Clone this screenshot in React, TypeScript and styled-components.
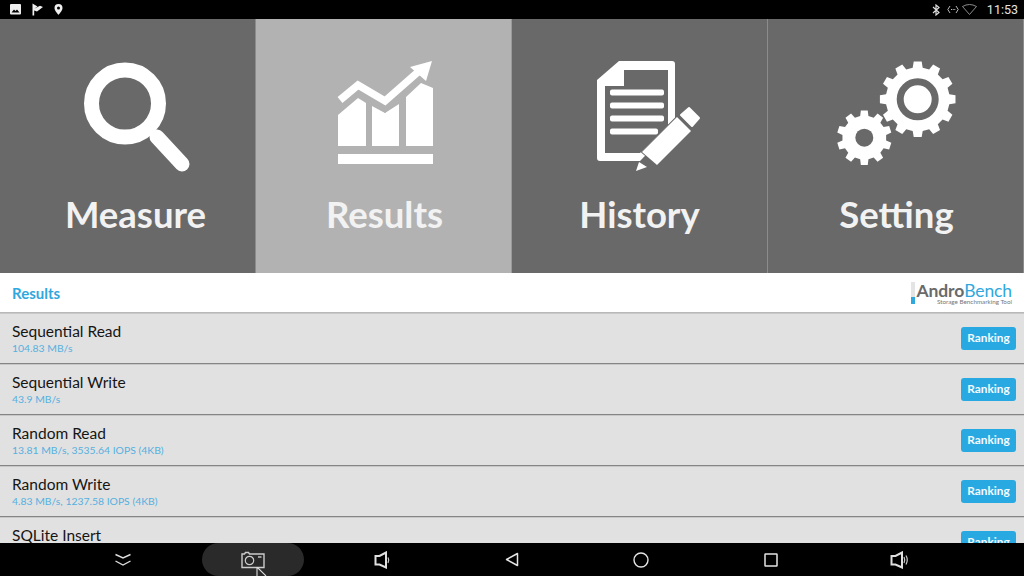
import React from "react";
import styled, { createGlobalStyle } from "styled-components";

const Global = createGlobalStyle`
  html, body { margin: 0; padding: 0; background: #000; }
  #root { width: 1024px; height: 576px; overflow: hidden; }
`;

const Screen = styled.div`
  width: 1024px; height: 576px; display: flex; flex-direction: column;
  font-family: Lato, "Liberation Sans", sans-serif; overflow: hidden; background: #e1e1e1;
`;
const StatusBar = styled.div`
  height: 19px; flex: none; background: #000; display: flex; align-items: center;
  justify-content: space-between; padding: 0 6px 0 10px; color: #ddd;
`;
const StatusGroup = styled.div`display: flex; align-items: center; gap: ${p => p.$gap}px;`;
const Clock = styled.span`
  font-family: Roboto, sans-serif; font-size: 12.5px; color: #e4e4e4; margin-left: 7px;
`;
const Tabs = styled.div`height: 254px; flex: none; display: grid; grid-template-columns: repeat(4, 256px);`;
const Tab = styled.div`
  background: ${p => (p.$active ? "#b2b2b2" : "#696969")};
  border-right: 1px solid ${p => (p.$active ? "#9a9a9a" : "#8c8c8c")};
  display: flex; flex-direction: column; align-items: center; padding-top: 36px; box-sizing: border-box;
`;
const TabIcon = styled.svg`width: 128px; height: 120px; flex: none; display: block;`;
const TabLabel = styled.div`
  color: #f2f2f2; font-weight: 700; font-size: 36.5px; line-height: 44px; margin-top: 17px;
  margin-left: ${p => p.$shift}px;
`;
const Header = styled.div`
  height: 39px; flex: none; background: #fff; display: flex; align-items: center;
  justify-content: space-between; padding: 0 12px;
`;
const HeaderTitle = styled.div`color: #2fa8de; font-weight: 700; font-size: 15px;`;
const Logo = styled.div`display: flex; align-items: stretch; gap: 1px; height: 22px;`;
const LogoBar = styled.div`
  width: 4px; background: linear-gradient(#e4e4e4 0 68%, #2fa8de 68% 100%);
`;
const LogoText = styled.div`display: flex; flex-direction: column; align-items: flex-end;`;
const LogoName = styled.div`font-size: 17.5px; line-height: 18px; color: #2fa8de; letter-spacing: -0.1px;`;
const LogoStrong = styled.span`color: #6a6a6a; font-weight: 700;`;
const LogoSub = styled.div`font-size: 6.3px; line-height: 4px; color: #777; white-space: nowrap;`;
const List = styled.div`flex: 1; min-height: 0; overflow: hidden; border-top: 1px solid #b8b8b8;`;
const Row = styled.div`
  height: 49px; background: #e1e1e1; border-top: 1px solid #c8c8c8; border-bottom: 1px solid #858585;
  display: flex; align-items: center; justify-content: space-between; padding: 0 8px 0 12px;
`;
const RowText = styled.div`display: flex; flex-direction: column; padding-bottom: 2px;`;
const RowName = styled.div`font-size: 15.5px; line-height: 20px; color: #151515;`;
const RowValue = styled.div`font-size: 10.4px; line-height: 13px; color: #55b0e0; margin-top: 1px;`;
const RankButton = styled.div`
  width: 55px; height: 23px; box-sizing: border-box; padding-bottom: 2px; border-radius: 3px;
  background: #29a9e1; color: #f4fbff; font-weight: 700;
  font-size: 11.8px; display: flex; align-items: center; justify-content: center; flex: none;
`;
const NavBar = styled.div`
  height: 33px; flex: none; background: #000; display: grid; grid-template-columns: repeat(7, 129.5px);
  padding: 0 0 0 58.5px;
`;
const NavItem = styled.div`
  position: relative; display: flex; align-items: center; justify-content: center;
  justify-self: center; width: ${p => (p.$active ? "102px" : "100%")};
  background: ${p => (p.$active ? "#2a2a2a" : "transparent")};
  border-radius: 17px;
`;
const Cursor = styled.svg`position: absolute; left: 54px; top: 24px; width: 12px; height: 12px;`;

function gearPath(cx: number, cy: number, outer: number, root: number, teeth: number) {
  const step = (Math.PI * 2) / teeth;
  const pts: string[] = [];
  for (let i = 0; i < teeth; i++) {
    const a = i * step - Math.PI / 2;
    const p = (r: number, o: number) =>
      `${(cx + r * Math.cos(a + o * step)).toFixed(2)},${(cy + r * Math.sin(a + o * step)).toFixed(2)}`;
    pts.push(p(root, -0.3), p(outer, -0.2), p(outer, 0.2), p(root, 0.3));
  }
  return "M" + pts.join("L") + "Z";
}

const DARK = "#696969";
const LIGHT = "#b2b2b2";

const MeasureIcon = () => (
  <TabIcon viewBox="64 55 128 120">
    <circle cx="125" cy="103.5" r="33.5" fill="none" stroke="#fff" strokeWidth="15" />
    <path d="M157 137L182 164" stroke="#fff" strokeWidth="15" strokeLinecap="round" />
  </TabIcon>
);
const ResultsIcon = () => (
  <TabIcon viewBox="320 55 128 120">
    <g fill="#fff">
      <path d="M338 115L358 98L366 103V146H338Z" />
      <path d="M372 106L385 113L399 104V146H372Z" />
      <path d="M406 97L421 83L433 88V146H406Z" />
      <rect x="338" y="154" width="95" height="10" />
      <path d="M410 67L432 61L426 81Z" />
    </g>
    <path d="M340 100L358 85L385 101L418 72" fill="none" stroke="#fff" strokeWidth="7.500" />
    <path d="M340 110L358 94.500L385 111L421 79" fill="none" stroke={LIGHT} strokeWidth="3" />
  </TabIcon>
);
const HistoryIcon = () => (
  <TabIcon viewBox="576 55 128 120">
    <path d="M597 80L619 61H672Q675 61 675 64V125L640 161H600Q597 161 597 158Z" fill="#fff" />
    <path d="M605 86H624V70H668V125L640 153H605Z" fill={DARK} />
    <g fill="#fff">
      <rect x="610" y="89.500" width="54" height="6" rx="2" />
      <rect x="610" y="102.500" width="54" height="6" rx="2" />
      <rect x="610" y="115.500" width="54" height="6" rx="2" />
      <rect x="610" y="128.500" width="48" height="6" rx="2" />
    </g>
    <path d="M642 152L677 117L691 131L657 165Z" fill="#fff" stroke={DARK} strokeWidth="2" paintOrder="stroke" />
    <path d="M681 115L689 108L699 118L692 126Z" fill="#fff" stroke="#fff" strokeWidth="2" strokeLinejoin="round" />
    <path d="M636 171L639 162L647 167Z" fill="#fff" />
  </TabIcon>
);
const SettingIcon = () => (
  <TabIcon viewBox="832 55 128 120">
    <path d={gearPath(917.7, 99.3, 38, 32, 12)} fill="#fff" />
    <circle cx="917.7" cy="99.300" r="17.500" fill="none" stroke={DARK} strokeWidth="7" />
    <path d={gearPath(864.3, 137.7, 27.5, 22, 10)} fill="#fff" />
    <circle cx="864.3" cy="137.700" r="9" fill={DARK} />
  </TabIcon>
);

const rows = [
  ["Sequential Read", "104.83 MB/s"],
  ["Sequential Write", "43.9 MB/s"],
  ["Random Read", "13.81 MB/s, 3535.64 IOPS (4KB)"],
  ["Random Write", "4.83 MB/s, 1237.58 IOPS (4KB)"],
  ["SQLite Insert", "\u00A0"],
];

export default function App() {
  return (
    <Screen>
      <Global />
      <StatusBar>
        <StatusGroup $gap={11}>
          <svg width="11" height="11" viewBox="0 0 11 11">
            <rect width="11" height="10.500" rx="1" fill="#eee" />
            <path d="M1.500 8.500L4 5.500L5.500 7L7 5.500L9.500 8.500Z" fill="#000" />
          </svg>
          <svg width="11" height="13" viewBox="0 0 11 13">
            <path d="M0.500 0.500L5.500 3.500L2.200 5.800L8 2.800L11 4L5 8.500L2.200 7.500V12.500H0.500Z" fill="#eee" />
          </svg>
          <svg width="9" height="11" viewBox="0 0 9 11">
            <path fillRule="evenodd" d="M4.500 0A4 4 0 0 1 8.500 4C8.500 6.500 5.500 9.500 4.500 11C3.500 9.500 0.500 6.500 0.500 4A4 4 0 0 1 4.500 0ZM4.500 2.500A1.500 1.500 0 1 0 4.500 5.500A1.500 1.500 0 1 0 4.500 2.500Z" fill="#eee" />
          </svg>
        </StatusGroup>
        <StatusGroup $gap={3}>
          <svg width="12" height="12" viewBox="0 0 12 12">
            <path d="M1 3L7 8.500L4 11V1L7 3.500L1 9" fill="none" stroke="#ddd" strokeWidth="1.200" />
          </svg>
          <svg width="12" height="9" viewBox="0 0 12 9">
            <path d="M3 1L0.800 4.500L3 8M9 1L11.200 4.500L9 8" fill="none" stroke="#ccc" strokeWidth="0.900" />
            <path d="M4 4.500H5M5.700 4.500H6.700M7.300 4.500H8.300" stroke="#bbb" strokeWidth="1" />
          </svg>
          <svg width="15" height="11" viewBox="0 0 15 11">
            <path d="M0.500 2.500Q7.500 -1.500 14.500 2.500L7.500 10.500Z" fill="none" stroke="#999" strokeWidth="0.900" />
          </svg>
          <Clock>11:53</Clock>
        </StatusGroup>
      </StatusBar>
      <Tabs>
        <Tab>
          <MeasureIcon />
          <TabLabel $shift={16}>Measure</TabLabel>
        </Tab>
        <Tab $active>
          <ResultsIcon />
          <TabLabel $shift={2}>Results</TabLabel>
        </Tab>
        <Tab>
          <HistoryIcon />
          <TabLabel $shift={0}>History</TabLabel>
        </Tab>
        <Tab>
          <SettingIcon />
          <TabLabel $shift={2}>Setting</TabLabel>
        </Tab>
      </Tabs>
      <Header>
        <HeaderTitle>Results</HeaderTitle>
        <Logo>
          <LogoBar />
          <LogoText>
            <LogoName>
              <LogoStrong>Andro</LogoStrong>Bench
            </LogoName>
            <LogoSub>Storage Benchmarking Tool</LogoSub>
          </LogoText>
        </Logo>
      </Header>
      <List>
        {rows.map(([name, value]) => (
          <Row key={name}>
            <RowText>
              <RowName>{name}</RowName>
              <RowValue>{value}</RowValue>
            </RowText>
            <RankButton>Ranking</RankButton>
          </Row>
        ))}
      </List>
      <NavBar>
        <NavItem>
          <svg width="18" height="14" viewBox="0 0 18 14">
            <path d="M1.500 1.500L9 5L16.500 1.500M1.500 8L9 12L16.500 8" fill="none" stroke="#ddd" strokeWidth="1.400" />
          </svg>
        </NavItem>
        <NavItem $active>
          <svg width="24" height="18" viewBox="0 0 24 18">
            <path d="M1 3H3.500L4.500 1.500H7.500L8.500 3H23V16.500H1Z" fill="none" stroke="#ccc" strokeWidth="1.400" />
            <circle cx="8.500" cy="9.500" r="4.200" fill="none" stroke="#ccc" strokeWidth="1.200" />
            <path d="M17 6H20.500" stroke="#ccc" strokeWidth="1.400" />
          </svg>
          <Cursor viewBox="0 0 12 12">
            <path d="M1 0V11M1 0L10 9" fill="none" stroke="#ddd" strokeWidth="1.100" />
          </Cursor>
        </NavItem>
        <NavItem>
          <svg width="17" height="18" viewBox="0 0 17 18">
            <path d="M1.500 5H5.500L12 1.500V16.500L5.500 13.500H1.500Z" fill="none" stroke="#e0e0e0" strokeWidth="2" />
            <path d="M14 6.500Q15.500 9 14 12" fill="none" stroke="#ccc" strokeWidth="1.200" />
          </svg>
        </NavItem>
        <NavItem>
          <svg width="14" height="15" viewBox="0 0 14 15">
            <path d="M1.500 7.500L12.500 1.500V13.500Z" fill="none" stroke="#e4e4e4" strokeWidth="1.500" strokeLinejoin="round" />
          </svg>
        </NavItem>
        <NavItem>
          <svg width="16" height="16" viewBox="0 0 16 16">
            <circle cx="8" cy="8" r="7" fill="none" stroke="#e4e4e4" strokeWidth="1.400" />
          </svg>
        </NavItem>
        <NavItem>
          <svg width="14" height="14" viewBox="0 0 14 14">
            <rect x="1" y="1" width="12" height="12" rx="0.500" fill="none" stroke="#e4e4e4" strokeWidth="1.500" />
          </svg>
        </NavItem>
        <NavItem>
          <svg width="20" height="18" viewBox="0 0 20 18">
            <path d="M1.500 5H5.500L12 1.500V16.500L5.500 13.500H1.500Z" fill="none" stroke="#e0e0e0" strokeWidth="2" />
            <path d="M14 6Q15.500 9 14 12M16 4.500Q18.500 9 16 13.500" fill="none" stroke="#ccc" strokeWidth="1.200" />
          </svg>
        </NavItem>
      </NavBar>
    </Screen>
  );
}
